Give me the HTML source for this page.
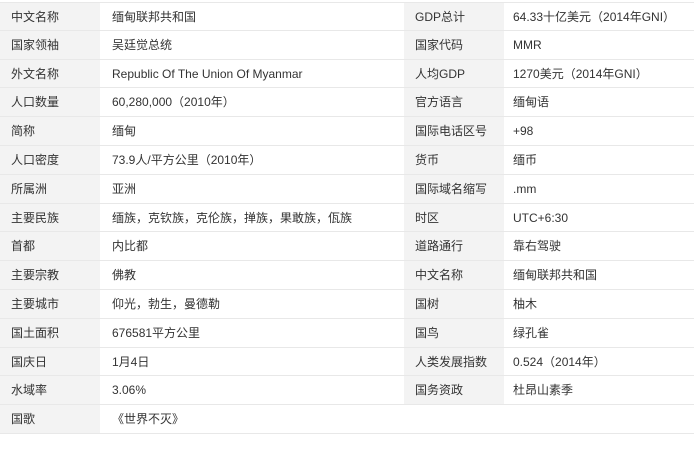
<!DOCTYPE html><html><head><meta charset="utf-8"><style>
body{margin:0;width:694px;height:462px;background:#fff;font-family:"Liberation Sans","Noto Sans CJK SC",sans-serif;font-size:12px;color:#333;overflow:hidden}
.r{position:absolute;left:0;width:694px;height:28.8px;border-bottom:1px solid #e8e8e8;box-sizing:border-box}
.c{position:absolute;top:0;height:100%;line-height:28px;box-sizing:border-box}
.l{background:#f3f3f3;width:100px}
</style></head><body>
<div id="t"></div>
<script>
var d=[["中文名称","缅甸联邦共和国","GDP总计","64.33十亿美元（2014年GNI）"],["国家领袖","吴廷觉总统","国家代码","MMR"],["外文名称","Republic Of The Union Of Myanmar","人均GDP","1270美元（2014年GNI）"],["人口数量","60,280,000（2010年）","官方语言","缅甸语"],["简称","缅甸","国际电话区号","+98"],["人口密度","73.9人/平方公里（2010年）","货币","缅币"],["所属洲","亚洲","国际域名缩写",".mm"],["主要民族","缅族，克钦族，克伦族，掸族，果敢族，佤族","时区","UTC+6:30"],["首都","内比都","道路通行","靠右驾驶"],["主要宗教","佛教","中文名称","缅甸联邦共和国"],["主要城市","仰光，勃生，曼德勒","国树","柚木"],["国土面积","676581平方公里","国鸟","绿孔雀"],["国庆日","1月4日","人类发展指数","0.524（2014年）"],["水域率","3.06%","国务资政","杜昂山素季"],["国歌","《世界不灭》","",""]];
var h="";d.forEach(function(r,i){var y=2+i*28.8;h+='<div class="r" style="top:'+y+'px'+(i==0?';border-top:1px solid #e8e8e8':'')+'">'+
'<div class="c l" style="left:0;padding-left:11px">'+r[0]+'</div><div class="c" style="left:112px">'+r[1]+'</div>'+
(i<14?'<div class="c l" style="left:404px;padding-left:11px">'+r[2]+'</div><div class="c" style="left:513px">'+r[3]+'</div>':'')+'</div>';});
document.getElementById("t").innerHTML=h;
</script>
</body></html>
